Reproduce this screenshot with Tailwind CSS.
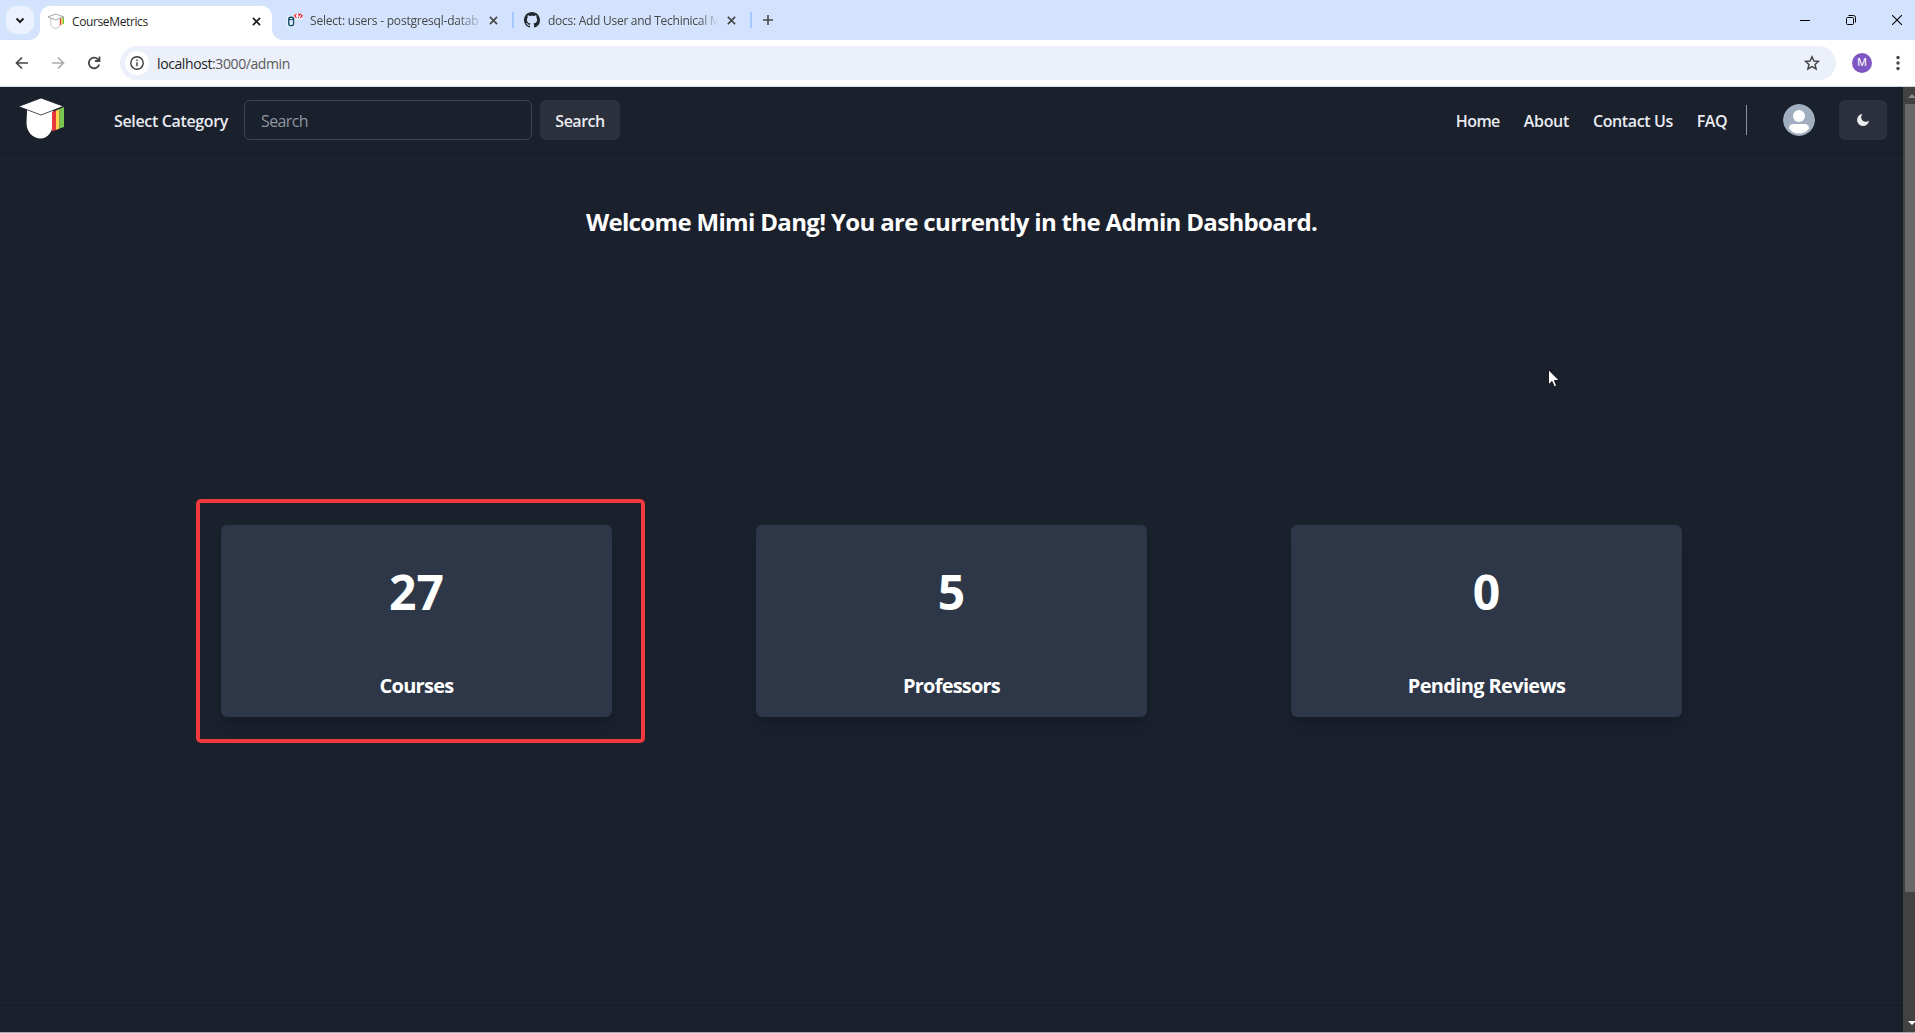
<!DOCTYPE html>
<html lang="en">
<head>
<meta charset="utf-8">
<title>CourseMetrics</title>
<script src="https://cdn.jsdelivr.net/npm/@tailwindcss/browser@4"></script>
</head>
<body class="w-[1915px] h-[1033px] overflow-hidden flex flex-col bg-[#1a202c] font-['Open_Sans',sans-serif] text-white">

<!-- Tab strip -->
<div class="h-10 shrink-0 bg-[#d3e3fd] flex items-start text-[12px] text-[#474747] whitespace-nowrap">
  <div class="w-10 h-10 flex justify-end items-start pt-1.5 pr-1.5 relative">
    <div class="size-7 rounded-[10px] bg-[#ebf1fd] flex items-center justify-center">
      <svg class="size-3" viewBox="0 0 12 12" fill="none" stroke="#1f1f1f" stroke-width="2"><path d="M2.500 4.500 6 8l3.500-3.500"/></svg>
    </div>
    <div class="absolute bottom-0 right-0 size-2.5 bg-[radial-gradient(circle_at_0_0,#d3e3fd_9.5px,#fff_10px)]"></div>
    <div class="absolute bottom-0 left-0 size-2"></div>
  </div>
  <div class="w-[232px] h-[34px] mt-1.5 rounded-t-[10px] bg-white flex items-center pl-2 pb-1 text-[#1f1f1f] relative">
    <svg class="w-4 h-4 mr-2" viewBox="0 0 46 42"><path d="M8 14h28v14a14 14 0 0 1-28 0z" fill="#fff" stroke="#bbb" stroke-width="2.500"/><path d="M34 14l4-1v19l-4 2z" fill="#e53935"/><path d="M38 13l4-2v20l-4 1z" fill="#fdd349"/><path d="M42 11l4-2v20l-4 1z" fill="#76c043"/><path d="M0 9 22 1l23 8-23 9z" fill="#fff" stroke="#999" stroke-width="2.500"/></svg>
    <span class="w-[172px] tracking-[-0.38px] pt-px">CourseMetrics</span>
    <svg class="size-[9px] ml-[8px]" viewBox="0 0 10 10" stroke="#1f1f1f" stroke-width="1.800"><path d="M1 1l8 8M9 1l-8 8"/></svg>
    <div class="absolute bottom-0 -right-2.5 size-2.5 bg-[radial-gradient(circle_at_100%_0,#d3e3fd_9.5px,#fff_10px)]"></div>
  </div>
  <div class="h-10 flex items-center pl-[15px]">
    <svg class="w-4 h-4" viewBox="0 0 16 16"><path d="M.5 4.500h7.500v10H.5z" fill="#fff"/><path d="M7 1.500h8.500v6H7z" fill="#fff" opacity=".7"/><path d="M1.800 6.500q0-1.300 2.400-1.300t2.400 1.300v5.800q0 1.300-2.400 1.300t-2.400-1.300z" fill="#e3edfb" stroke="#0c4a62" stroke-width="1.400"/><path d="M2 7.300q2.200 1 4.400 0" fill="none" stroke="#0c4a62"/><path d="M9.500 1.800 7.500 3.800l2 2M11 2h1.300v1.500l-.8.800M11.500 5.300v1M13.300 1.800l2 2-2 2" fill="none" stroke="#f0202a" stroke-width="1.200"/></svg>
    <span class="ml-[7px] mr-px w-[170px] tracking-[-0.2px] pt-[2px] [mask-image:linear-gradient(to_right,#000_86%,transparent_103%)]">Select: users - postgresql-datab</span>
    <svg class="size-[9px] ml-[8px]" viewBox="0 0 10 10" stroke="#474747" stroke-width="1.800"><path d="M1 1l8 8M9 1l-8 8"/></svg>
    <div class="w-0.5 h-4 bg-[#a8c7fa] ml-[14px]"></div>
    <svg class="size-4 ml-[10px]" viewBox="0 0 16 16" fill="#24292f"><path d="M8 0C3.580 0 0 3.580 0 8c0 3.540 2.290 6.530 5.470 7.590.4.070.55-.17.55-.38 0-.19-.01-.82-.01-1.490-2.010.37-2.530-.49-2.690-.94-.09-.23-.48-.94-.82-1.130-.28-.15-.68-.52-.01-.53.63-.01 1.080.58 1.230.82.72 1.210 1.870.87 2.330.66.07-.52.28-.87.51-1.070-1.780-.2-3.640-.89-3.640-3.950 0-.87.31-1.590.82-2.150-.08-.2-.36-1.020.08-2.120 0 0 .67-.21 2.200.82.64-.18 1.320-.27 2-.27s1.360.09 2 .27c1.530-1.040 2.200-.82 2.200-.82.44 1.100.16 1.920.08 2.120.51.56.82 1.270.82 2.150 0 3.070-1.870 3.750-3.650 3.950.29.25.54.73.54 1.480 0 1.070-.01 1.930-.01 2.200 0 .21.15.46.55.38A8.010 8.010 0 0 0 16 8c0-4.420-3.580-8-8-8z"/></svg>
    <span class="ml-2 w-[171px] tracking-[-0.27px] pt-[2px] [mask-image:linear-gradient(to_right,#000_88%,transparent_100%)]">docs: Add User and Techinical M</span>
    <svg class="size-[9px] ml-[8px]" viewBox="0 0 10 10" stroke="#474747" stroke-width="1.800"><path d="M1 1l8 8M9 1l-8 8"/></svg>
    <div class="w-0.5 h-4 bg-[#a8c7fa] ml-[14px]"></div>
    <svg class="size-[10px] ml-[11px]" viewBox="0 0 10 10" stroke="#474747" stroke-width="1.600"><path d="M5 0v10M0 5h10"/></svg>
  </div>
  <div class="ml-auto h-10 flex items-center pr-[13px] gap-9">
    <svg class="size-[10px]" viewBox="0 0 10 10" stroke="#000"><path d="M0 5.500h10"/></svg>
    <svg class="size-[10px]" viewBox="0 0 10 10" fill="none" stroke="#000"><rect x=".5" y="2.500" width="7" height="7" rx="1"/><path d="M2.500.5h5q2 0 2 2v5"/></svg>
    <svg class="size-[10px]" viewBox="0 0 10 10" stroke="#000" stroke-width="1.100"><path d="M0 0l10 10M10 0L0 10"/></svg>
  </div>
</div>

<!-- Toolbar -->
<div class="h-[47px] shrink-0 bg-white border-b border-[#d5dbe5] flex items-start pt-1.5 pl-3.5">
  <div class="h-[34px] flex items-center gap-5">
    <svg class="size-4" viewBox="0 0 16 16" fill="none" stroke="#474747" stroke-width="1.700"><path d="M14 8H3M8 2.500 2.500 8 8 13.500"/></svg>
    <svg class="size-4" viewBox="0 0 16 16" fill="none" stroke="#adadad" stroke-width="1.700"><path d="M2 8h11M8 2.500 13.500 8 8 13.500"/></svg>
    <svg class="size-4" viewBox="0 0 16 16" fill="none" stroke="#474747" stroke-width="1.800"><path d="M13.200 9.500A5.300 5.300 0 1 1 12 4.300L13.500 6M13.500 1.500V6H9"/></svg>
  </div>
  <div class="ml-[18px] w-[1716px] h-[34px] rounded-full bg-[#ecf0fa] flex items-center pl-[5px] pr-[16px]">
    <div class="size-6 rounded-full bg-white flex items-center justify-center">
      <svg class="size-3.5" viewBox="0 0 14 14" fill="none" stroke="#3c3c3c" stroke-width="1.400"><circle cx="7" cy="7" r="6.200"/><path d="M7 6.300v4M7 3.600v1.400"/></svg>
    </div>
    <span class="ml-2 text-[14px] tracking-[-0.4px] text-[#5a5a5a] whitespace-nowrap"><span class="text-[#1f1f1f]">localhost</span>:3000/admin</span>
    <svg class="size-[16px] ml-auto" viewBox="0 0 16 16" fill="none" stroke="#474747" stroke-width="1.500"><path d="M8 1.800l1.900 4.200 4.600.4-3.500 3 1.100 4.500L8 11.500l-4.100 2.400L5 9.400l-3.500-3 4.600-.4z"/></svg>
  </div>
  <div class="ml-4 mt-[7px] size-5 rounded-full bg-[#7e57c2] text-[11px] leading-5 text-center font-['Roboto',sans-serif]">M</div>
  <svg class="w-1 h-4 ml-[24px] mt-[9px]" viewBox="0 0 4 16" fill="#474747"><circle cx="2" cy="2.500" r="1.700"/><circle cx="2" cy="8" r="1.700"/><circle cx="2" cy="13.500" r="1.700"/></svg>
</div>

<!-- Page -->
<div class="h-[945px] shrink-0 flex">
  <div class="w-[1903px] flex flex-col relative">
    <nav class="h-[67px] border-b border-[#151a25] flex items-center pl-[18px] pr-4 text-[16px] font-semibold text-[#e8ebf0] whitespace-nowrap">
      <svg class="w-[47px] h-[43px] mb-[3px]" viewBox="0 0 47 43"><path d="M9 13h26v13c0 8-5 15.500-12.500 15.500S8.500 35 8.500 26z" fill="#fff"/><path d="M34 15l4-1.500v19.500l-4 1.500z" fill="#e5383b"/><path d="M38 13.500l3.500-1.500v19.500l-3.500 1.500z" fill="#ffd34d"/><path d="M41.500 12l4.500-2v20l-4.500 1.500z" fill="#7ac74f"/><path d="M.500 9.500 23 1l22.500 8.300L23 18z" fill="#fff" stroke="#1a202c" stroke-width=".8"/></svg>
      <span class="ml-[49px] w-[130px] tracking-[-0.35px] pt-px">Select Category</span>
      <div class="w-[288px] h-10 rounded-md border border-[#3f444e] pl-4 pt-[2px] flex items-center font-normal tracking-[-0.6px] text-[#90959f]">Search</div>
      <div class="ml-2 w-20 h-10 rounded-md bg-[#2c303c] pt-px flex items-center justify-center tracking-[-0.5px]">Search</div>
      <div class="ml-auto flex gap-6 pt-px"><span class="tracking-[-0.6px]">Home</span><span class="tracking-[-0.3px]">About</span><span class="tracking-[-0.4px]">Contact Us</span><span class="tracking-[-0.5px]">FAQ</span></div>
      <div class="w-px h-[30px] bg-[#8d929b] ml-[19px]"></div>
      <svg class="size-8 ml-9 rounded-full" viewBox="0 0 32 32"><circle cx="16" cy="16" r="16" fill="#a0aec0"/><circle cx="16" cy="12" r="6" fill="#fff"/><path d="M6 24.500q0-4.500 4.500-4.500h11q4.500 0 4.500 4.500-3.500 5-10 5t-10-5z" fill="#fff"/></svg>
      <div class="ml-6 w-12 h-10 rounded-md bg-[#2c303c] flex items-center justify-center">
        <svg class="size-[14px]" viewBox="0 0 14 14"><path d="M6.500 1A6 6 0 1 0 13 7.500 4 4 0 0 1 6.500 1z" fill="#ececee"/></svg>
      </div>
    </nav>
    <h1 class="mt-[50px] h-9 leading-9 text-center text-[24px] font-bold tracking-[-0.66px] whitespace-nowrap">Welcome Mimi Dang! You are currently in the Admin Dashboard.</h1>
    <div class="mt-[285px] flex gap-36 justify-center">
      <div class="w-[391px] h-48 rounded-md bg-[#2d3748] shadow-lg flex flex-col items-center">
        <div class="mt-[37px] leading-[60px] text-[48px] font-bold">27</div>
        <div class="mt-[49px] text-[20px] leading-[30px] font-bold tracking-[-0.7px]">Courses</div>
      </div>
      <div class="w-[391px] h-48 rounded-md bg-[#2d3748] shadow-lg flex flex-col items-center">
        <div class="mt-[37px] leading-[60px] text-[48px] font-bold">5</div>
        <div class="mt-[49px] text-[20px] leading-[30px] font-bold tracking-[-0.8px]">Professors</div>
      </div>
      <div class="w-[391px] h-48 rounded-md bg-[#2d3748] shadow-lg flex flex-col items-center">
        <div class="mt-[37px] leading-[60px] text-[48px] font-bold">0</div>
        <div class="mt-[49px] text-[20px] leading-[30px] font-bold tracking-[-0.65px]">Pending Reviews</div>
      </div>
    </div>
    <div class="mt-auto h-[27px] border-t border-[#151a25]"></div>
    <!-- Highlight frame -->
    <div class="absolute left-[196px] top-[412px] w-[449px] h-[244px] rounded-[5px] border-4 border-[#f03a3e]"></div>
    <!-- Pointer -->
    <svg class="absolute left-[1548px] top-[282px] w-3 h-[19px]" viewBox="0 0 12 19"><path d="M.5.700v15l3.500-3.300 2.300 5.300 2.300-1-2.200-5.200h4.800z" fill="#fff" stroke="#000" stroke-width=".8"/></svg>
  </div>
  <!-- Scrollbar -->
  <div class="w-3 bg-[#424242] flex flex-col items-end">
    <svg class="w-[7px] h-[4px] mt-[7px]" viewBox="0 0 7 4"><path d="M0 4 4 0l4 4z" fill="#8a8a8a"/></svg>
    <div class="mt-[6px] w-2.5 h-[788px] bg-[#686868]"></div>
    <svg class="w-[7px] h-[4px] mt-auto mb-[7px]" viewBox="0 0 7 4"><path d="M0 0h8L4 4z" fill="#fff"/></svg>
  </div>
</div>
<div class="h-px shrink-0 bg-[#a6a8b2]"></div>
</body>
</html>
